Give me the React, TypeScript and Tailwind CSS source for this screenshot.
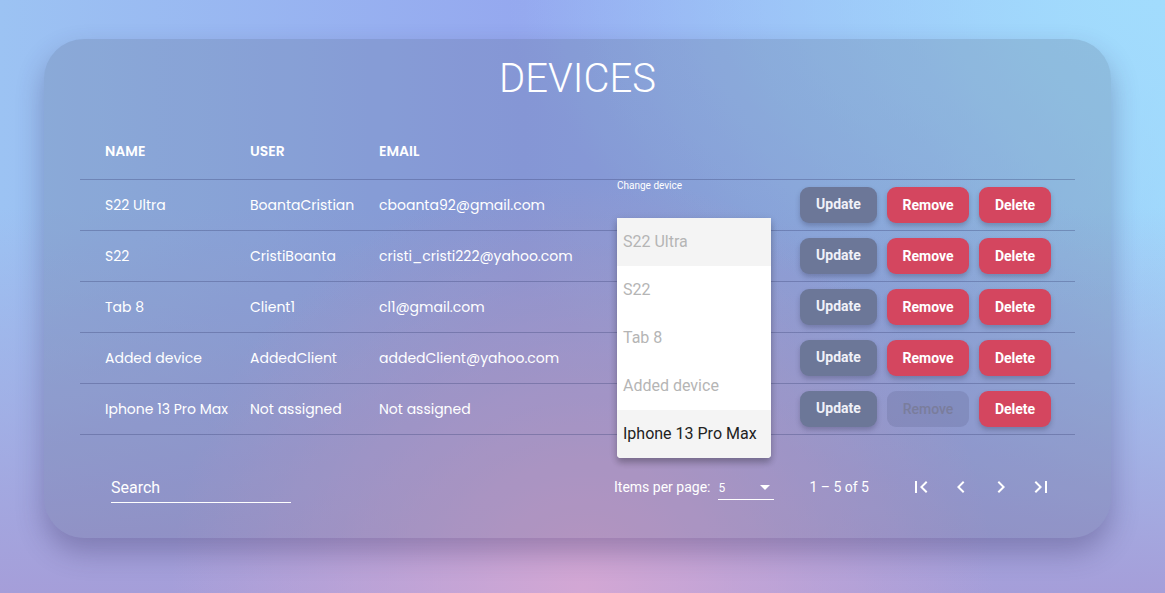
import React from "react";

interface Device {
  name: string;
  user: string;
  email: string;
  assigned: boolean;
}

const devices: Device[] = [
  { name: "S22 Ultra", user: "BoantaCristian", email: "cboanta92@gmail.com", assigned: true },
  { name: "S22", user: "CristiBoanta", email: "cristi_cristi222@yahoo.com", assigned: true },
  { name: "Tab 8", user: "Client1", email: "cl1@gmail.com", assigned: true },
  { name: "Added device", user: "AddedClient", email: "addedClient@yahoo.com", assigned: true },
  { name: "Iphone 13 Pro Max", user: "Not assigned", email: "Not assigned", assigned: false },
];

const options = ["S22 Ultra", "S22", "Tab 8", "Added device", "Iphone 13 Pro Max"];

const cols = "grid grid-cols-[170px_129px_238px_183px_1fr]";

function NavIcon({ d }: { d: string }) {
  return (
    <button className="w-10 h-10 flex items-center justify-center">
      <svg width="24" height="24" viewBox="0 0 24 24" fill="white">
        <path d={d} />
      </svg>
    </button>
  );
}

export default function App() {
  return (
    <div className="relative w-full h-[593px] overflow-hidden pt-[39px] px-[44px] bg-[radial-gradient(ellipse_at_50%_100%,#d3a7d4_0%,transparent_50%),linear-gradient(180deg,transparent_35%,#a59ed9_100%),radial-gradient(ellipse_at_100%_0%,#a2dcfd_0%,transparent_40%),linear-gradient(90deg,#9cc3f3_0%,#95a8ef_45%,#9bbcf6_80%,#9fd6fb_100%)]">
      <div className="relative w-[1067px] h-[499px] rounded-[40px] bg-[rgba(70,80,110,0.2)] shadow-[0_14px_28px_rgba(50,40,90,0.32)] flex flex-col">
        <h1 className="pt-[20px] text-center text-white text-[40px] leading-[40px] font-light font-['Roboto',sans-serif]">
          DEVICES
        </h1>

        <div className="mt-[25px] mx-[36px] font-['Poppins','Open_Sans',sans-serif] text-white text-[14px]">
          <div className={`${cols} h-[56px] items-center border-b border-[rgba(60,70,120,0.35)] font-semibold`}>
            <div className="pl-[25px]">NAME</div>
            <div>USER</div>
            <div>EMAIL</div>
            <div />
            <div />
          </div>
          {devices.map((d, i) => (
            <div
              key={d.name}
              className={`${cols} relative h-[51px] items-center border-b border-[rgba(60,70,120,0.35)]`}
            >
              <div className="pl-[25px] whitespace-nowrap">{d.name}</div>
              <div className="whitespace-nowrap">{d.user}</div>
              <div className="whitespace-nowrap">{d.email}</div>
              <div className="relative h-full">
                {i === 0 && (
                  <span className="absolute left-0 top-[-2px] text-[10px] font-['Roboto',sans-serif] text-white">
                    Change device
                  </span>
                )}
              </div>
              <div className="flex items-center gap-[10px] font-['Roboto',sans-serif] font-bold text-[14px]">
                <button className="w-[77px] h-[36px] -mt-[1px] rounded-[9px] bg-[#6c7798] text-[#f0f1f8] shadow-[0_3px_5px_rgba(30,30,60,0.25)]">
                  Update
                </button>
                {d.assigned ? (
                  <button className="w-[82px] h-[36px] rounded-[9px] bg-[#d4465f] text-white shadow-[0_3px_5px_rgba(30,30,60,0.25)]">
                    Remove
                  </button>
                ) : (
                  <button className="w-[82px] h-[36px] rounded-[9px] bg-[rgba(110,115,160,0.35)] text-[#7a7d9c] font-medium">
                    Remove
                  </button>
                )}
                <button className="w-[72px] h-[36px] rounded-[9px] bg-[#d4465f] text-white shadow-[0_3px_5px_rgba(30,30,60,0.25)]">
                  Delete
                </button>
              </div>
            </div>
          ))}
        </div>

        <div className="mt-[24px] h-[56px] flex items-center font-['Roboto',sans-serif] text-white">
          <div className="ml-[67px] w-[180px] border-b border-white pb-[4px] text-[16px] leading-[20px] mt-[6px]">
            Search
          </div>
          <div className="ml-auto mr-[50px] flex items-center">
            <span className="text-[14px]">Items per page:</span>
            <div className="ml-[8px] w-[56px] h-[24px] border-b border-white flex items-center justify-between text-[12px] mt-[2px]">
              <span>5</span>
              <span className="mr-[4px] w-0 h-0 border-l-[5px] border-r-[5px] border-t-[5px] border-l-transparent border-r-transparent border-t-white" />
            </div>
            <span className="ml-[35px] text-[14px]">1 – 5 of 5</span>
            <div className="ml-[32px] flex">
              <NavIcon d="M18.41 16.59L13.82 12l4.59-4.59L17 6l-6 6 6 6zM6 6h2v12H6z" />
              <NavIcon d="M15.41 7.41L14 6l-6 6 6 6 1.41-1.41L10.83 12z" />
              <NavIcon d="M10 6L8.59 7.41 13.17 12l-4.58 4.59L10 18l6-6z" />
              <NavIcon d="M5.59 7.41L10.18 12l-4.59 4.59L7 18l6-6-6-6zM16 6h2v12h-2z" />
            </div>
          </div>
        </div>

        <div className="absolute left-[573px] top-[179px] w-[154px] rounded-b-[4px] bg-white shadow-[0_5px_6px_rgba(0,0,0,0.2),0_2px_8px_rgba(0,0,0,0.12)] font-['Roboto',sans-serif] text-[16px] overflow-hidden">
          {options.map((o, i) => (
            <div
              key={o}
              className={`h-[48px] flex items-center pl-[6px] ${i === 0 || i === 4 ? "bg-[#f4f4f4]" : "bg-white"} ${i === 4 ? "text-[#222]" : "text-[#b5b5b5]"}`}
            >
              {o}
            </div>
          ))}
        </div>
      </div>
    </div>
  );
}
